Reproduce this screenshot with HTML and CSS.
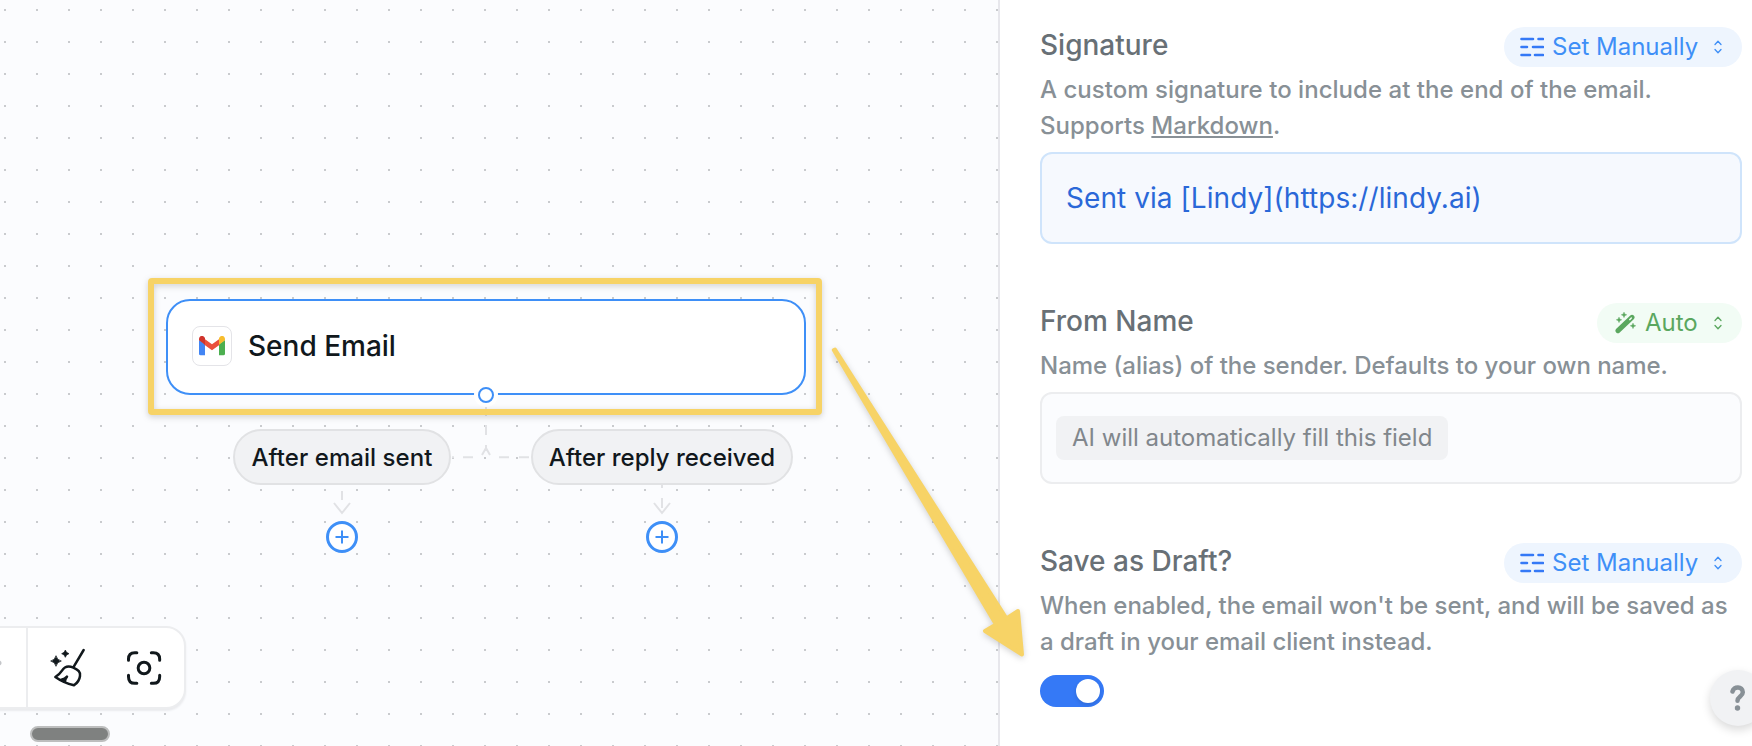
FILE: index.html
```html
<!DOCTYPE html>
<html lang="en">
<head>
<meta charset="utf-8">
<title>Flow editor</title>
<link rel="stylesheet" href="styles.css">
</head>
<body>
<div class="app">
  <main class="canvas">
    <svg class="edges" width="998" height="746" viewBox="0 0 998 746">
      <path d="M486 407v9M486 425v10M486 445v6M482 455l4-7 4 7M452 457.200h2M463 457.200h10M499 457.200h10M519 457.200h10"/>
      <path d="M342 491v9M334 503l8 10 8-10M662 485v3M662 498v10M654 503l8 10 8-10"/>
    </svg>
    <div class="node">
      <span class="node-icon">
        <svg width="26" height="20" viewBox="0 0 78 60">
          <path fill="#4285f4" d="M0 12v41q0 5 5 5h13V24z"/>
          <path fill="#4caf50" d="M78 12v41q0 5-5 5H60V24z"/>
          <path fill="#ea503c" d="M16 8l23 17L62 8v18L39 43 16 26z"/>
          <path fill="#d0342c" d="M0 12V9C0 1 9-3 15 2l3 4v20L3 15Q0 13 0 12z"/>
          <path fill="#f7bd2e" d="M78 12V9c0-8-9-12-15-7l-3 4v20l15-11q3-2 3-3z"/>
        </svg>
      </span>
      <span class="node-title">Send Email</span>
    </div>
    <span class="handle"></span>
    <div class="branch branch-sent">After email sent</div>
    <div class="branch branch-reply">After reply received</div>
    <svg class="add add-sent" viewBox="0 0 32 32"><circle cx="16" cy="16" r="14.500"/><path d="M9.500 16h13M16 9.500v13"/></svg>
    <svg class="add add-reply" viewBox="0 0 32 32"><circle cx="16" cy="16" r="14.500"/><path d="M9.500 16h13M16 9.500v13"/></svg>
    <div class="toolbar">
      <span class="tool-cut"></span>
      <svg class="broom" width="36" height="40" viewBox="150 142 108 120">
        <path class="fill" d="M168 168q3 13 16 16-13 3-16 16-3-13-16-16 13-3 16-16zM196 151q2 9 11 11-9 2-11 11-2-9-11-11 9-2 11-11z"/>
        <path class="line" d="M251 151l-31 52M166 232q13-8 20-19c8-13 20-15 34-9 15 7 22 12 20 25q-2 17-18 28-32-8-56-25zM184 240q11-2 17-9-5 6-6 13"/>
      </svg>
      <svg class="focus" width="36" height="36" viewBox="378 150 108 108">
        <path class="line thick" d="M385.500 181v-4q0-19 19-19h6M454 158h6q19 0 19 19v4M385.500 226v4q0 20 19 20h6M454 250h6q19 0 19-20v-4"/>
        <circle class="line thick" cx="432" cy="204" r="17.500"/>
      </svg>
    </div>
    <span class="scroll-thumb"></span>
  </main>

  <aside class="panel">
    <section class="field">
      <header class="field-head">
        <h2>Signature</h2>
        <button class="mode mode-manual">
          <svg class="bars" width="24" height="20" viewBox="0 0 24 20"><path d="M1.500 2H13M18.500 2H23M1.500 10H7M13 10h10M1.500 18H10M15 18h8"/></svg>
          <span>Set Manually</span>
          <svg class="sort" width="8" height="14" viewBox="0 0 8 14"><path d="M1 4.500L4 1.200 7 4.500M1 9.500l3 3.300 3-3.300"/></svg>
        </button>
      </header>
      <p class="desc">A custom signature to include at the end of the email.<br>Supports <a class="link">Markdown</a>.</p>
      <div class="input input-value">Sent via [Lindy](https://lindy.ai)</div>
    </section>

    <section class="field">
      <header class="field-head">
        <h2>From Name</h2>
        <button class="mode mode-auto">
          <svg class="wand" width="22" height="22" viewBox="645 63 66 66">
            <path class="stick" d="M654 119l42-40"/>
            <path class="tip" d="M689 86l5-5"/>
            <path class="spark" d="M672 63l2.500 6 6 2.500-6 2.500L672 80l-2.500-6-6-2.500 6-2.500zM657 78l2.500 6 6 2.500-6 2.500L657 95l-2.500-6-6-2.500 6-2.500zM699 96l2.500 6 6 2.500-6 2.500L699 113l-2.500-6-6-2.500 6-2.500z"/>
          </svg>
          <span>Auto</span>
          <svg class="sort" width="8" height="14" viewBox="0 0 8 14"><path d="M1 4.500L4 1.200 7 4.500M1 9.500l3 3.300 3-3.300"/></svg>
        </button>
      </header>
      <p class="desc desc-name">Name (alias) of the sender. Defaults to your own name.</p>
      <div class="input input-auto"><span class="chip">AI will automatically fill this field</span></div>
    </section>

    <section class="field">
      <header class="field-head">
        <h2>Save as Draft?</h2>
        <button class="mode mode-manual">
          <svg class="bars" width="24" height="20" viewBox="0 0 24 20"><path d="M1.500 2H13M18.500 2H23M1.500 10H7M13 10h10M1.500 18H10M15 18h8"/></svg>
          <span>Set Manually</span>
          <svg class="sort" width="8" height="14" viewBox="0 0 8 14"><path d="M1 4.500L4 1.200 7 4.500M1 9.500l3 3.300 3-3.300"/></svg>
        </button>
      </header>
      <p class="desc desc-name">When enabled, the email won't be sent, and will be saved as<br>a draft in your email client instead.</p>
      <div class="toggle"><span class="knob"></span></div>
    </section>
  </aside>

  <div class="highlight"></div>
  <svg class="pointer" width="1752" height="746" viewBox="0 0 1752 746">
    <path d="M833.800 350L996 624.500 985 631l37 23.500L1018 611l-11.500 7.500-171.500-269z"/>
  </svg>
  <div class="help"><svg width="16" height="26" viewBox="0 0 16 26"><path d="M2.500 6.500C3.500 1 12.800 1 12.800 7.200c0 4.300-5.300 4.300-5.300 8.600"/><circle cx="7.500" cy="23" r="2.700"/></svg></div>
</div>
</body>
</html>
```
FILE: styles.css
```css
* { box-sizing: border-box; }

body {
  margin: 0;
  font-family: Inter, "Liberation Sans", sans-serif;
  color: #11181c;
}

.app {
  position: relative;
  display: flex;
  width: 1752px;
  height: 746px;
  overflow: hidden;
  background: #fff;
}

.canvas {
  position: relative;
  flex: 0 0 998px;
  overflow: hidden;
  background-color: #fbfcfe;
  background-image: radial-gradient(circle at 5px 10px, #c9cbce 1px, transparent 1.3px);
  background-size: 32px 32px;
}

.edges { position: absolute; left: 0; top: 0; }
.edges path { fill: none; stroke: #e1e2e5; stroke-width: 2; }

.node {
  position: absolute;
  left: 166px;
  top: 299px;
  display: flex;
  align-items: center;
  gap: 16px;
  width: 640px;
  height: 96px;
  padding: 0 24px 2px;
  border: 2px solid #3e8ff7;
  border-radius: 24px;
  background: #fff;
}

.node-icon {
  display: flex;
  align-items: center;
  justify-content: center;
  width: 40px;
  height: 40px;
  border: 1px solid #e4e4e8;
  border-radius: 8px;
}

.node-title { font-size: 28px; font-weight: 500; line-height: 40px; }

.handle {
  position: absolute;
  left: 478px;
  top: 387px;
  width: 16px;
  height: 16px;
  border: 2px solid #3e8ff7;
  border-radius: 50%;
  background: #fff;
  box-shadow: 0 0 0 4px #fff;
}

.branch {
  position: absolute;
  top: 429px;
  display: flex;
  align-items: center;
  justify-content: center;
  height: 56px;
  border: 2px solid #e1e2e4;
  border-radius: 28px;
  background: #f1f2f4;
  font-size: 24px;
  font-weight: 500;
  white-space: nowrap;
}
.branch-sent { left: 233px; width: 218px; letter-spacing: .05px; }
.branch-reply { left: 531px; width: 262px; }

.add { position: absolute; top: 521px; width: 32px; height: 32px; }
.add-sent { left: 326px; }
.add-reply { left: 646px; }
.add circle { fill: #fff; stroke: #3e8ff7; stroke-width: 3; }
.add path { stroke: #3e8ff7; stroke-width: 2; }

.toolbar {
  position: absolute;
  left: -40px;
  top: 626px;
  display: flex;
  align-items: center;
  width: 226px;
  height: 83px;
  padding-right: 22px;
  border: 2px solid #ecedef;
  border-radius: 20px;
  background: #fff;
  box-shadow: 0 2px 2px #eaebee;
}
.tool-cut {
  align-self: stretch;
  width: 66px;
  border-right: 2px solid #ecedef;
  background: radial-gradient(circle at 37px 35px, #c4c6c9 2px, transparent 3px);
}
.broom { margin: -1px 0 0 22px; }
.focus { margin: 1px 0 0 40px; }
.line { fill: none; stroke: #11181c; stroke-width: 7.500; stroke-linecap: round; stroke-linejoin: round; }
.thick { stroke-width: 9; }
.fill { fill: #11181c; stroke: #11181c; stroke-width: 2; stroke-linejoin: round; }

.scroll-thumb {
  position: absolute;
  left: 30px;
  top: 726px;
  width: 80px;
  height: 16px;
  border: 2px solid #bdbebe;
  border-radius: 8px;
  background: #7f8180;
}

.panel {
  flex: 1;
  display: flex;
  flex-direction: column;
  gap: 59px;
  padding: 27px 10px 0 40px;
  border-left: 2px solid #e7e7ec;
  background: #fff;
}

.field { display: flex; flex-direction: column; }

.field-head {
  display: flex;
  justify-content: space-between;
  align-items: flex-start;
  height: 45px;
}

h2 { margin: 0; font-size: 28px; font-weight: 500; line-height: 36px; color: #687076; }

.mode {
  display: flex;
  align-items: center;
  height: 40px;
  padding: 0 20px 0 16px;
  border: 0;
  border-radius: 20px;
  font: 400 24px/36px Inter, "Liberation Sans", sans-serif;
}
.mode svg { fill: none; }
.mode-manual { width: 238px; background: #eef5fe; color: #3e8ff7; }
.mode-auto { width: 145px; padding-left: 18px; background: #f2fcf5; color: #5ba75f; }
.mode-manual span { margin-left: 8px; }
.mode-auto span { margin-left: 8px; }
.bars path { stroke: #3579f6; stroke-width: 2.600; stroke-linecap: round; }
.sort { margin-left: auto; }
.sort path { stroke: currentColor; stroke-width: 1.300; stroke-linecap: round; stroke-linejoin: round; }
.stick { stroke: currentColor; stroke-width: 15; stroke-linecap: round; }
.tip { stroke: #f2fcf5; stroke-width: 4; stroke-linecap: round; }
.wand .spark { fill: currentColor; stroke: currentColor; stroke-width: 1; }

.desc { margin: 0; font-size: 24px; font-weight: 500; line-height: 36px; letter-spacing: .03px; color: #889096; white-space: nowrap; }
.desc-name { letter-spacing: -.02px; }
.link { text-decoration: underline; }

.input {
  display: flex;
  align-items: center;
  height: 92px;
  margin-top: 8px;
  border: 2px solid;
  border-radius: 12px;
}
.input-value { padding-left: 24px; border-color: #cfe4fb; background: #f6f9fe; color: #2a68d8; font-size: 28px; letter-spacing: .06px; }
.input-auto { padding-left: 14px; border-color: #ecedef; background: #fbfcfe; }
.chip {
  width: 392px;
  padding: 0 16px;
  border-radius: 8px;
  background: #f1f2f4;
  color: #81878c;
  font-size: 24px;
  line-height: 44px;
  white-space: nowrap;
}

.toggle {
  display: flex;
  justify-content: flex-end;
  width: 64px;
  height: 32px;
  margin-top: 15px;
  padding: 4px;
  border-radius: 16px;
  background: #3579f6;
}
.knob { width: 24px; height: 24px; border-radius: 50%; background: #fff; box-shadow: 0 2px 4px rgba(0, 0, 0, .12); }

.highlight {
  position: absolute;
  left: 148px;
  top: 278px;
  width: 674px;
  height: 137px;
  border: 6px solid #f7d366;
  border-radius: 4px;
  filter: drop-shadow(0 2px 3px rgba(0, 0, 0, .18));
}

.pointer { position: absolute; left: 0; top: 0; filter: drop-shadow(0 2px 3px rgba(0, 0, 0, .18)); }
.pointer path { fill: #f7d366; stroke: #f7d366; stroke-width: 4; stroke-linejoin: round; }

.help {
  position: absolute;
  left: 1710px;
  top: 670px;
  display: flex;
  align-items: center;
  justify-content: center;
  width: 56px;
  height: 56px;
  border-radius: 50%;
  background: #f1f2f4;
  box-shadow: 0 4px 10px rgba(0, 0, 0, .15);
}
.help path { fill: none; stroke: #889096; stroke-width: 4.500; stroke-linecap: round; }
.help circle { fill: #889096; }
```
